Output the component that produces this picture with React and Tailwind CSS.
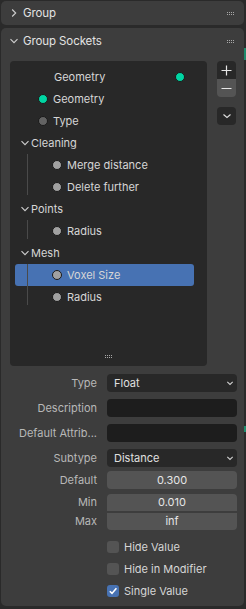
import React from "react";

const font = { fontFamily: "Inter, 'Noto Sans', sans-serif" };

function Grip() {
  return (
    <div className="grid grid-cols-4 gap-[1px]">
      {Array.from({ length: 8 }).map((_, i) => (
        <span key={i} className="block w-[1px] h-[1px] bg-[#a8a8a8]" />
      ))}
    </div>
  );
}

function Chevron({ open, className = "" }) {
  return (
    <svg width="10" height="10" viewBox="0 0 10 10" className={className}>
      {open ? (
        <path d="M1.5 3.2 L5 6.7 L8.5 3.2" fill="none" stroke="#cfcfcf" strokeWidth="1.1" />
      ) : (
        <path d="M3.2 1.5 L6.7 5 L3.2 8.5" fill="none" stroke="#cfcfcf" strokeWidth="1.1" />
      )}
    </svg>
  );
}

function Dot({ color }) {
  return (
    <span
      className="block w-[10px] h-[10px] rounded-full border border-[#1a1a1a] shrink-0"
      style={{ backgroundColor: color }}
    />
  );
}

function Socket({ label, color = "#a1a1a1", indent = false, active = false }) {
  const pad = indent ? (active ? "pl-[37px]" : "pl-[42px]") : "pl-[28px]";
  return (
    <div
      className={`h-[22px] flex items-center ${pad} ${
        active ? "bg-[#4772b3] rounded-[3px] ml-[5px] mr-[13px]" : ""
      }`}
    >
      <Dot color={color} />
      <span className="ml-[5px] text-[#d6d6d6]">{label}</span>
    </div>
  );
}

function Section({ label, children }) {
  return (
    <>
      <div className="h-[22px] flex items-center pl-[10px]">
        <Chevron open />
        <span className="ml-[1px] text-[#d6d6d6]">{label}</span>
      </div>
      <div className="relative">
        <span className="absolute left-[17px] top-0 bottom-[3px] w-[1px] bg-[#4a4a4a]" />
        {children}
      </div>
    </>
  );
}

function Row({ label, children }) {
  return (
    <div className="flex items-center">
      <div className="w-[96px] text-right text-[#b8b8b8] whitespace-nowrap">{label}</div>
      <div className="ml-[10px] w-[130px]">{children}</div>
    </div>
  );
}

function Dropdown({ value }) {
  return (
    <div className="h-[18px] rounded-[4px] bg-[#282828] flex items-center justify-between pl-[7px] pr-[3px] text-[#e0e0e0]">
      <span>{value}</span>
      <svg width="8" height="8" viewBox="0 0 8 8">
        <path d="M1.3 2.8 L4 5.4 L6.7 2.8" fill="none" stroke="#d0d0d0" strokeWidth="1.1" />
      </svg>
    </div>
  );
}

function TextField() {
  return <div className="h-[18px] rounded-[4px] bg-[#1d1d1d]" />;
}

function Check({ label, checked }) {
  return (
    <div className="flex items-center h-[22px] pl-[106px]">
      <span
        className={`block w-[12px] h-[12px] rounded-[3px] flex items-center justify-center ${
          checked ? "bg-[#4772b3]" : "bg-[#545454]"
        }`}
      >
        {checked && (
          <svg width="10" height="10" viewBox="0 0 10 10">
            <path d="M1.8 5.2 L4 7.4 L8.4 2.2" fill="none" stroke="#ffffff" strokeWidth="1.6" />
          </svg>
        )}
      </span>
      <span className="ml-[5px] text-[#d6d6d6]">{label}</span>
    </div>
  );
}

export default function App() {
  return (
    <div className="w-[246px] h-[609px] bg-[#2a2a2a] text-[11px] leading-[18px] relative overflow-hidden" style={font}>
      <span className="absolute right-0 top-[48px] w-[2px] h-[12px] bg-[#1f8a6c]" />
      <span className="absolute right-0 top-[426px] w-[2px] h-[6px] bg-[#1f8a6c]" />
      <div className="pl-[1px] pr-[2px] pt-[1px] flex flex-col gap-[3px]">
        {/* Group panel */}
        <div className="h-[24px] rounded-[5px] bg-[#3d3d3d] flex items-center pl-[8px] pr-[10px]">
          <Chevron />
          <span className="ml-[4px] text-[11.5px] tracking-[-0.1px] text-[#e3e3e3]">Group</span>
          <span className="ml-auto">
            <Grip />
          </span>
        </div>

        {/* Group Sockets panel */}
        <div className="h-[578px] rounded-[5px] bg-[#3d3d3d] flex flex-col">
          <div className="h-[26px] flex items-center pl-[8px] pr-[10px]">
            <Chevron open />
            <span className="ml-[4px] text-[11.5px] tracking-[-0.1px] text-[#e3e3e3]">Group Sockets</span>
            <span className="ml-auto">
              <Grip />
            </span>
          </div>

          <div className="flex mt-[7px] pl-[9px] pr-[8px]">
            <div className="w-[198px] h-[305px] bg-[#282828] rounded-[4px] flex flex-col relative">
              <div className="h-[22px] mt-[5px] flex items-center pl-[44px]">
                <span className="text-[#d6d6d6]">Geometry</span>
                <span className="ml-auto mr-[22px]">
                  <Dot color="#00d6a3" />
                </span>
              </div>
              <Socket label="Geometry" color="#00d6a3" />
              <Socket label="Type" color="#636363" />
              <Section label="Cleaning">
                <Socket label="Merge distance" indent />
                <Socket label="Delete further" indent />
              </Section>
              <Section label="Points">
                <Socket label="Radius" indent />
              </Section>
              <Section label="Mesh">
                <Socket label="Voxel Size" indent active />
                <Socket label="Radius" indent />
              </Section>
              <div className="absolute bottom-[8px] left-0 right-0 flex justify-center">
                <Grip />
              </div>
            </div>

            <div className="ml-[10px] flex flex-col">
              <div className="w-[19px] rounded-[4px] overflow-hidden flex flex-col">
                <div className="h-[18px] bg-[#282828] flex items-center justify-center">
                  <svg width="11" height="11" viewBox="0 0 11 11">
                    <path d="M5.5 0.5 V10.5 M0.5 5.5 H10.5" stroke="#e6e6e6" strokeWidth="1.2" />
                  </svg>
                </div>
                <div className="h-[18px] bg-[#545454] flex items-center justify-center">
                  <svg width="11" height="11" viewBox="0 0 11 11">
                    <path d="M0.5 5.5 H10.5" stroke="#e6e6e6" strokeWidth="1.2" />
                  </svg>
                </div>
              </div>
              <div className="mt-[10px] w-[19px] h-[18px] rounded-[4px] bg-[#282828] flex items-center justify-center">
                <svg width="10" height="10" viewBox="0 0 10 10">
                  <path d="M1.5 3.5 L5 6.5 L8.5 3.5" fill="none" stroke="#e0e0e0" strokeWidth="1.1" />
                </svg>
              </div>
            </div>
          </div>

          <div className="mt-[8px] flex flex-col gap-[7px]">
            <Row label="Type">
              <Dropdown value="Float" />
            </Row>
            <Row label="Description">
              <TextField />
            </Row>
            <Row label="Default Attrib...">
              <TextField />
            </Row>
            <Row label="Subtype">
              <Dropdown value="Distance" />
            </Row>
          </div>

          <div className="mt-[4px]">
            <Row label="Default">
              <div className="h-[18px] rounded-[4px] bg-[#545454] flex items-center justify-center text-[#e6e6e6]">0.300</div>
            </Row>
          </div>
          <div className="mt-[4px] flex flex-col gap-[1px]">
            <Row label="Min">
              <div className="h-[17px] rounded-t-[4px] bg-[#545454] flex items-center justify-center text-[#e6e6e6]">0.010</div>
            </Row>
            <Row label="Max">
              <div className="h-[17px] rounded-b-[4px] bg-[#545454] flex items-center justify-center text-[#e6e6e6]">inf</div>
            </Row>
          </div>

          <div className="mt-[6px] flex flex-col">
            <Check label="Hide Value" />
            <Check label="Hide in Modifier" />
            <Check label="Single Value" checked />
          </div>
        </div>
      </div>
    </div>
  );
}
